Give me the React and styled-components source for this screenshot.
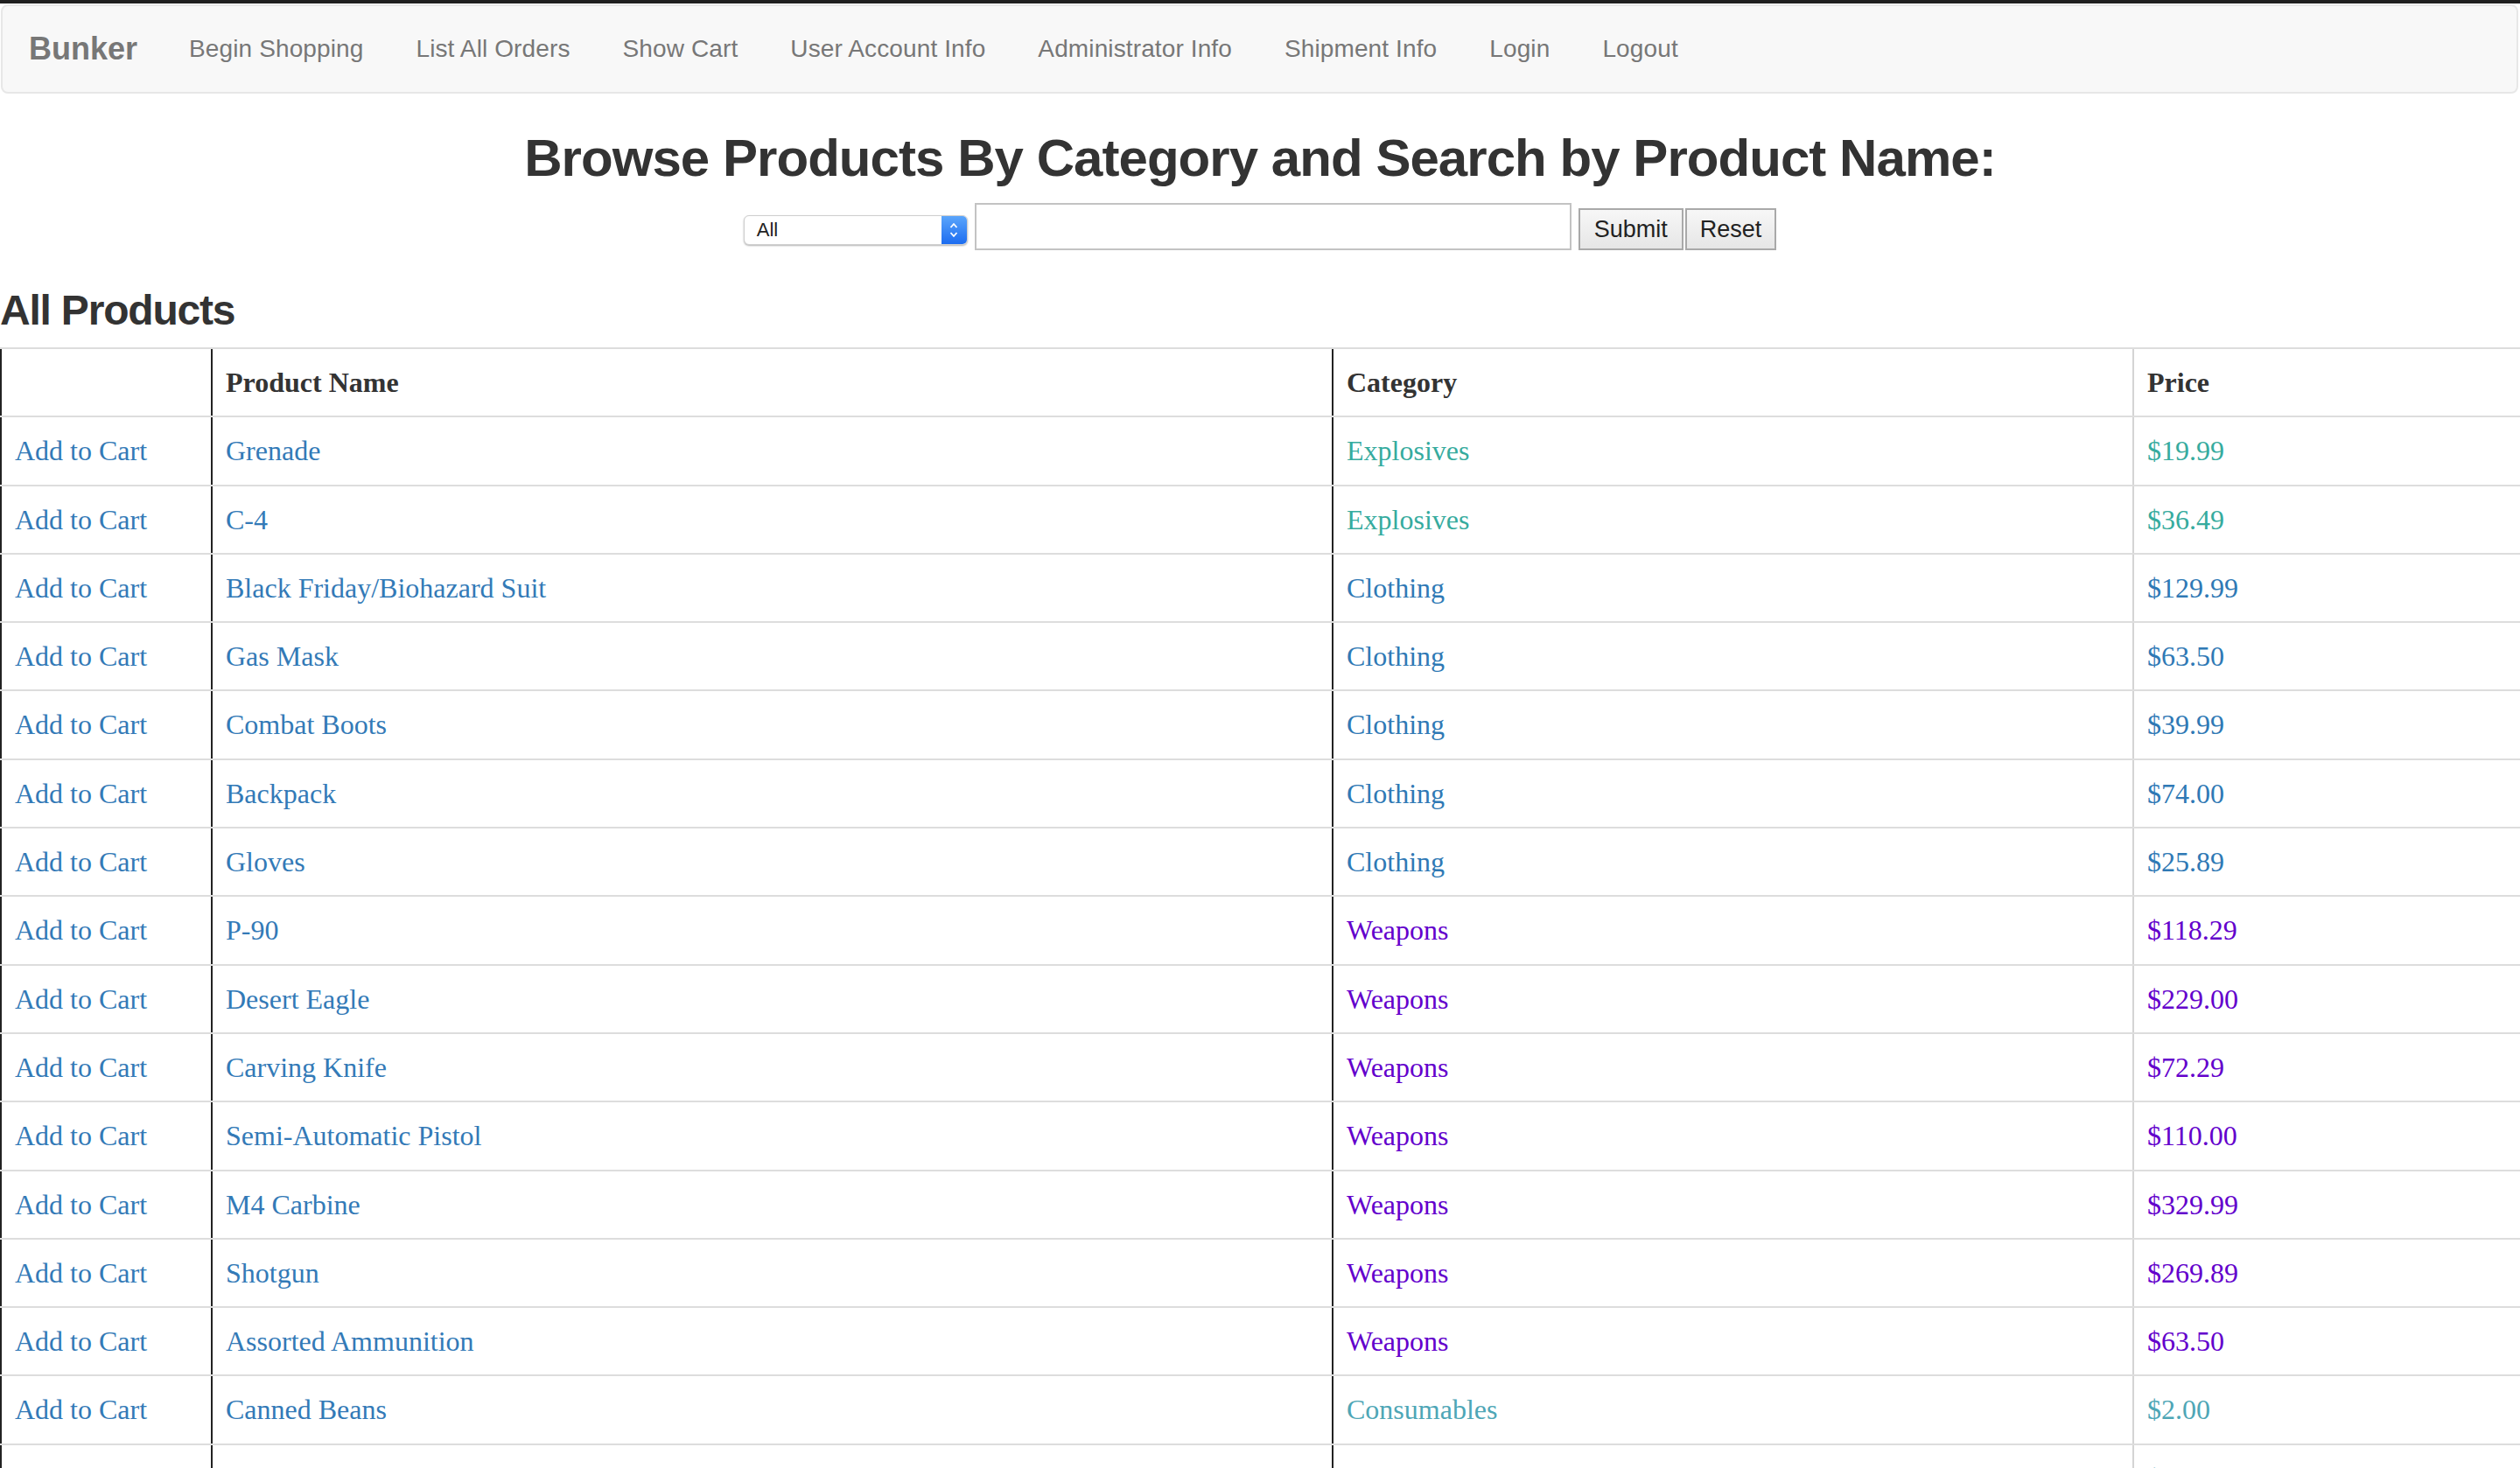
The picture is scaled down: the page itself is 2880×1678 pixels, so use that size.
import styled, { createGlobalStyle } from 'styled-components';

const GlobalStyle = createGlobalStyle`
  html, body {
    margin: 0;
    padding: 0;
    background: #fff;
  }
  body {
    font-family: "Liberation Sans", Arial, sans-serif;
    color: #333;
  }
  * {
    box-sizing: border-box;
  }
`;

const TopStrip = styled.div`
  height: 4px;
  background: #1f1f1f;
  margin-bottom: 1px;
`;

const Navbar = styled.nav`
  display: flex;
  align-items: center;
  height: 102px;
  margin: 0 2px 0 1px;
  background: #f8f8f8;
  border: 2px solid #e7e7e7;
  border-radius: 8px;
`;

const Brand = styled.a`
  padding: 0 29px 0 30px;
  font-size: 36px;
  font-weight: 700;
  color: #777;
  text-decoration: none;
`;

const NavLink = styled.a`
  padding: 0 30px;
  font-size: 28px;
  letter-spacing: 0.12px;
  color: #777;
  text-decoration: none;
`;

const Title = styled.h2`
  margin: 41px 0 18px;
  font-size: 60px;
  line-height: 66px;
  font-weight: 700;
  letter-spacing: -0.95px;
  text-align: center;
  color: #333;
`;

const SearchForm = styled.form`
  display: flex;
  justify-content: center;
  align-items: flex-end;
`;

const FakeSelect = styled.div`
  position: relative;
  display: flex;
  align-items: center;
  width: 256px;
  height: 34px;
  margin: 0 8px 6px 0;
  padding-left: 14px;
  background: #fff;
  border: 1px solid #cfcfcf;
  border-radius: 6px;
  box-shadow: 0 1px 2px rgba(0, 0, 0, 0.3);
  font-size: 22px;
  color: #222;
  overflow: hidden;
`;

const SelectArrows = styled.span`
  position: absolute;
  top: 0;
  right: 0;
  bottom: 0;
  width: 29px;
  display: flex;
  align-items: center;
  justify-content: center;
  background: linear-gradient(#5aa5fb, #1c6cf0);
`;

const SearchInput = styled.input`
  width: 682px;
  height: 54px;
  margin-right: 8px;
  border: 2px solid #c3c3c3;
  background: #fff;
  font-size: 26px;
  outline: none;
`;

const Button = styled.button`
  height: 48px;
  padding: 0 ${(p) => p.$pad}px;
  margin-right: ${(p) => p.$gap}px;
  border: 2px solid #a9a9a9;
  background: linear-gradient(#f7f7f7, #e6e6e6);
  font-family: "Liberation Sans", Arial, sans-serif;
  font-size: 27px;
  color: #222;
`;

const SectionTitle = styled.h3`
  margin: 42px 0 16px;
  font-size: 48px;
  line-height: 53px;
  font-weight: 700;
  letter-spacing: -1.2px;
  color: #333;
`;

const Table = styled.table`
  width: 100%;
  table-layout: fixed;
  border-collapse: collapse;
  font-family: "Liberation Serif", "Times New Roman", serif;
  font-size: 32px;
`;

const Cell = styled.td`
  padding: 16px 16px 16px 15px;
  line-height: 44.3px;
  border-top: 2px solid #ddd;
  border-bottom: 2px solid #ddd;
  border-left: 2px solid ${(p) => (p.$light ? '#d4d4d4' : '#222')};
  border-right: ${(p) => (p.$last ? '3px solid #222' : 'none')};
  color: ${(p) => p.$color || '#337ab7'};
  white-space: nowrap;
`;

const HeadCell = styled(Cell).attrs({ as: 'th' })`
  text-align: left;
  font-weight: 700;
  color: #333;
`;

const colors = {
  Explosives: '#36ab9e',
  Clothing: '#2f79b5',
  Weapons: '#6300cc',
  Consumables: '#4ea6b6',
};

const products = [
  ['Grenade', 'Explosives', '$19.99'],
  ['C-4', 'Explosives', '$36.49'],
  ['Black Friday/Biohazard Suit', 'Clothing', '$129.99'],
  ['Gas Mask', 'Clothing', '$63.50'],
  ['Combat Boots', 'Clothing', '$39.99'],
  ['Backpack', 'Clothing', '$74.00'],
  ['Gloves', 'Clothing', '$25.89'],
  ['P-90', 'Weapons', '$118.29'],
  ['Desert Eagle', 'Weapons', '$229.00'],
  ['Carving Knife', 'Weapons', '$72.29'],
  ['Semi-Automatic Pistol', 'Weapons', '$110.00'],
  ['M4 Carbine', 'Weapons', '$329.99'],
  ['Shotgun', 'Weapons', '$269.89'],
  ['Assorted Ammunition', 'Weapons', '$63.50'],
  ['Canned Beans', 'Consumables', '$2.00'],
  ['Canteen', 'Consumables', '$5.00'],
];

const navItems = [
  'Begin Shopping',
  'List All Orders',
  'Show Cart',
  'User Account Info',
  'Administrator Info',
  'Shipment Info',
  'Login',
  'Logout',
];

const Arrows = () => (
  <svg width="12" height="22" viewBox="0 0 12 22">
    <path d="M2.5 8 L6 4 L9.5 8" fill="none" stroke="#fff" strokeWidth="1.8" />
    <path d="M2.5 14 L6 18 L9.5 14" fill="none" stroke="#fff" strokeWidth="1.8" />
  </svg>
);

export default function App() {
  return (
    <>
      <GlobalStyle />
      <TopStrip />
      <Navbar>
        <Brand href="#">Bunker</Brand>
        {navItems.map((item) => (
          <NavLink key={item} href="#">
            {item}
          </NavLink>
        ))}
      </Navbar>

      <Title>Browse Products By Category and Search by Product Name:</Title>
      <SearchForm onSubmit={(e) => e.preventDefault()}>
        <FakeSelect>
          All
          <SelectArrows>
            <Arrows />
          </SelectArrows>
        </FakeSelect>
        <SearchInput type="text" />
        <Button $pad={16} $gap={2}>Submit</Button>
        <Button $pad={15} $gap={0} type="button">Reset</Button>
      </SearchForm>

      <SectionTitle>All Products</SectionTitle>
      <Table>
        <colgroup>
          <col style={{ width: 241 }} />
          <col style={{ width: 1281 }} />
          <col style={{ width: 915 }} />
          <col style={{ width: 443 }} />
        </colgroup>
        <thead>
          <tr>
            <HeadCell />
            <HeadCell>Product Name</HeadCell>
            <HeadCell>Category</HeadCell>
            <HeadCell $light $last>Price</HeadCell>
          </tr>
        </thead>
        <tbody>
          {products.map(([name, cat, price]) => (
            <tr key={name}>
              <Cell>Add to Cart</Cell>
              <Cell>{name}</Cell>
              <Cell $color={colors[cat]}>{cat}</Cell>
              <Cell $light $last $color={colors[cat]}>{price}</Cell>
            </tr>
          ))}
        </tbody>
      </Table>
    </>
  );
}
